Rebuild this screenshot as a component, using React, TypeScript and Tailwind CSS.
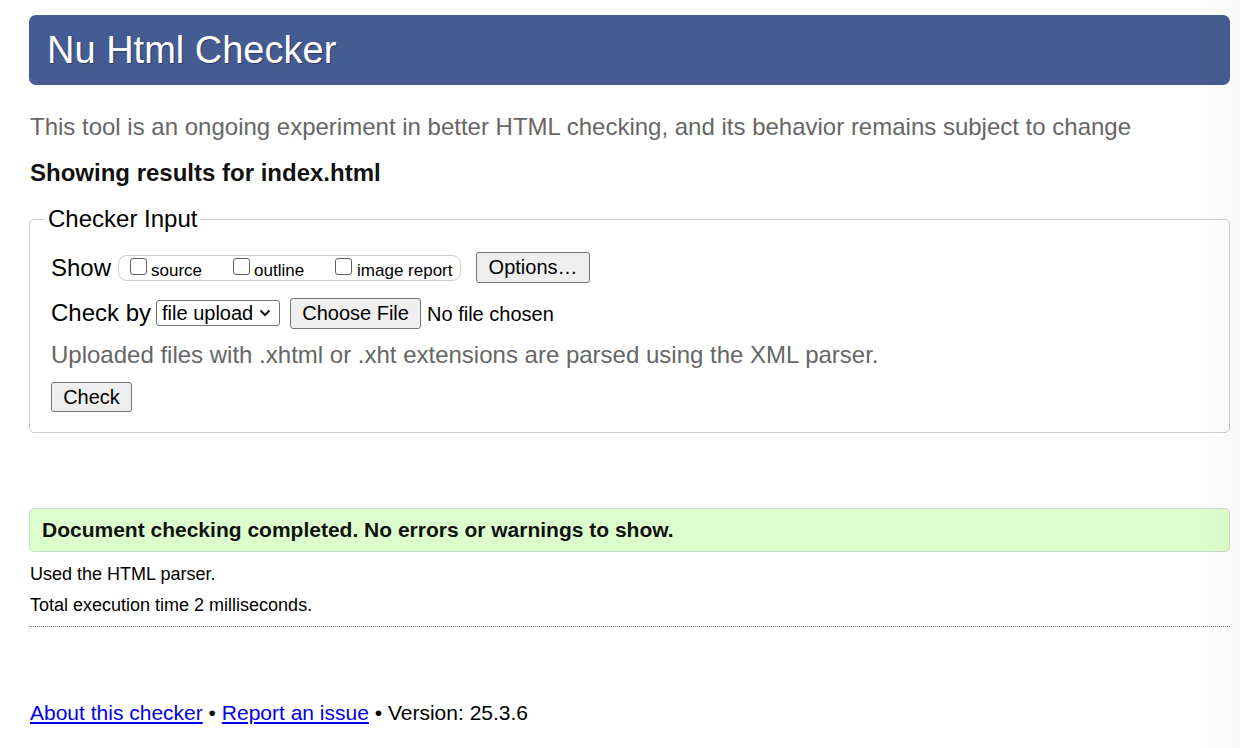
import React from "react";

function Box() {
  return <span className="inline-block w-[17px] h-[17px] border border-[#5f5f5f] rounded-[3px] bg-white shrink-0 self-start mt-[1px]" />;
}

function Btn({ children, cls }: { children: React.ReactNode; cls: string }) {
  return (
    <span className={"inline-flex items-center justify-center bg-[#efefef] border border-[#767676] rounded-[3px] text-[20px] text-black " + cls}>
      {children}
    </span>
  );
}

export default function App() {
  return (
    <div className="relative w-[1240px] h-[748px] bg-white overflow-hidden text-black" style={{ fontFamily: '"Liberation Sans", Arial, sans-serif' }}>
      <div className="ml-[29px] w-[1201px] pt-[15px]">
        <div className="h-[70px] bg-[#445c91] rounded-[7px] flex items-center pl-[18px]">
          <h1 className="text-[38px] leading-none text-white pb-[1px]" style={{ textShadow: "1px 1px 1px rgba(0,0,30,0.35)" }}>Nu Html Checker</h1>
        </div>
        <p className="mt-[28px] text-[24px] leading-[28px] text-[#666] pl-[1px]">
          This tool is an ongoing experiment in better HTML checking, and its behavior remains subject to change
        </p>
        <p className="mt-[18px] text-[24px] leading-[28px] font-bold text-[#111] pl-[1px]">Showing results for index.html</p>
        <fieldset className="mt-[18px] border border-[#cccccc] rounded-[5px] pl-[21px] pr-4 pb-[20px] min-w-0">
          <legend className="-ml-[6px] px-[3px] text-[24px] leading-[28px]">Checker Input</legend>
          <div className="mt-[19px] h-[31px] flex items-center">
            <span className="text-[24px] leading-none">Show</span>
            <div className="ml-[7px] h-[26px] w-[343px] border border-[#cccccc] rounded-[9px] flex items-start pl-[11px] pt-[1px]">
              <span className="flex items-center w-[103px]"><Box /><span className="ml-[4px] mt-[5px] text-[17px] leading-none">source</span></span>
              <span className="flex items-center w-[102px]"><Box /><span className="ml-[4px] mt-[5px] text-[17px] leading-none">outline</span></span>
              <span className="flex items-center"><Box /><span className="ml-[5px] mt-[5px] text-[17px] leading-none">image report</span></span>
            </div>
            <Btn cls="ml-[15px] h-[31px] w-[114px] pb-[1px]">Options…</Btn>
          </div>
          <div className="mt-[15px] h-[30px] flex items-center">
            <span className="text-[24px] leading-none">Check by</span>
            <span className="ml-[5px] h-[26px] w-[124px] border border-[#767676] rounded-[3px] flex items-center pl-[5px] text-[20px]">
              file upload
              <svg className="ml-[6px]" width="12" height="8" viewBox="0 0 12 8" fill="none" stroke="#111" strokeWidth="2"><path d="M1.5 1.5 6 6l4.5-4.5" /></svg>
            </span>
            <Btn cls="ml-[10px] h-[31px] w-[131px]">Choose File</Btn>
            <span className="ml-[6px] text-[20px] mt-[1px]">No file chosen</span>
          </div>
          <p className="mt-[13px] text-[24px] leading-[28px] text-[#666]">Uploaded files with .xhtml or .xht extensions are parsed using the XML parser.</p>
          <Btn cls="mt-[13px] h-[30px] w-[81px]">Check</Btn>
        </fieldset>
        <div className="mt-[75px] h-[44px] bg-[#dcffcd] border border-[#c8dcbf] rounded-[5px] flex items-center pl-[12px]">
          <span className="text-[21px] font-bold text-[#111]">Document checking completed. No errors or warnings to show.</span>
        </div>
        <p className="mt-[11px] text-[18px] leading-[22px] pl-[1px]">Used the HTML parser.</p>
        <p className="mt-[9px] text-[18px] leading-[22px] pl-[1px]">Total execution time 2 milliseconds.</p>
        <div className="mt-[10px] border-t border-dotted border-[#777]" />
        <p className="mt-[73px] text-[21px] leading-[26px] pl-[1px]">
          <a className="text-[#0000ee] underline">About this checker</a> • <a className="text-[#0000ee] underline">Report an issue</a> • Version: 25.3.6
        </p>
      </div>
      <div className="absolute right-0 top-0 h-full w-[40px] bg-gradient-to-r from-transparent to-black/[0.03] pointer-events-none" />
    </div>
  );
}
